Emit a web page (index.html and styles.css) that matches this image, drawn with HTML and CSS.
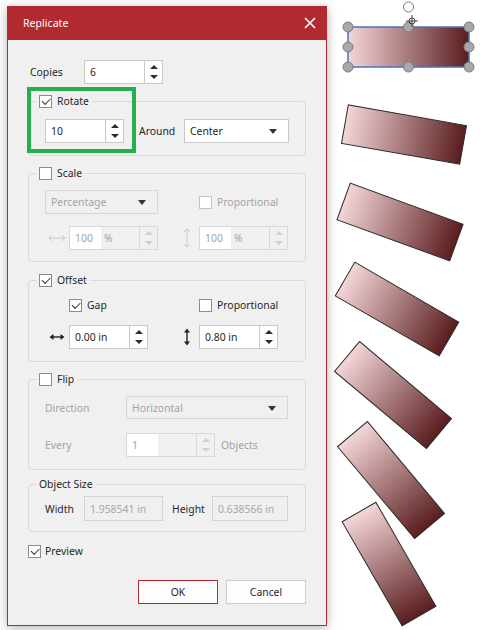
FILE: index.html
```html
<!DOCTYPE html>
<html lang="en">
<head>
    <meta charset="UTF-8">
    <meta name="viewport" content="width=device-width, initial-scale=1.0">
    <title>Replicate</title>
    <link rel="stylesheet" href="styles.css">
</head>
<body>
    <!-- drawing canvas behind the dialog -->
    <svg class="canvas" width="480" height="630" viewBox="0 0 480 630">
        <defs>
            <linearGradient id="shapeFill" x1="0" y1="0" x2="1" y2="0">
                <stop offset="0" stop-color="#f4d6d9"/>
                <stop offset="1" stop-color="#5a1d1e"/>
            </linearGradient>
        </defs>
        <g class="copy">
            <rect x="-60" y="-19.5" width="120" height="39" transform="translate(404 134.5) rotate(10)"/>
            <rect x="-60" y="-19.5" width="120" height="39" transform="translate(400 222) rotate(20)"/>
            <rect x="-60" y="-19.5" width="120" height="39" transform="translate(397 309) rotate(30)"/>
            <rect x="-60" y="-19.5" width="120" height="39" transform="translate(393 395) rotate(40)"/>
            <rect x="-60" y="-19.5" width="120" height="39" transform="translate(391 480) rotate(50)"/>
            <rect x="-60" y="-19.5" width="120" height="39" transform="translate(389 564) rotate(60)"/>
        </g>
        <!-- selected original -->
        <rect class="original" x="348" y="27" width="121" height="40"/>
        <circle class="rotate-grip" cx="408.5" cy="7" r="5"/>
        <g class="grips">
            <circle cx="348" cy="27" r="5"/>
            <circle cx="408.5" cy="27" r="5"/>
            <circle cx="469" cy="27" r="5"/>
            <circle cx="348" cy="47" r="5"/>
            <circle cx="469" cy="47" r="5"/>
            <circle cx="348" cy="67" r="5"/>
            <circle cx="408.5" cy="67" r="5"/>
            <circle cx="469" cy="67" r="5"/>
        </g>
        <g class="move-cursor">
            <circle cx="412" cy="21" r="3"/>
            <line x1="412" y1="15" x2="412" y2="27"/>
            <line x1="406" y1="21" x2="418" y2="21"/>
        </g>
    </svg>

    <div class="dialog">
        <div class="titlebar">
            <span>Replicate</span>
            <svg class="close" width="12" height="12" viewBox="0 0 12 12">
                <path d="M1 1 L11 11 M11 1 L1 11"/>
            </svg>
        </div>

        <div class="dialog-body">
            <div class="copies-row">
                <span class="label copies-label">Copies</span>
                <div class="spin">
                    <span class="spin-text">6</span>
                    <span class="spinner"><i class="up"></i><i class="down"></i></span>
                </div>
            </div>

            <fieldset class="group rotate-group">
                <legend><span class="check on"></span>Rotate</legend>
                <div class="group-body rotate-row">
                    <div class="spin">
                        <span class="spin-text">10</span>
                        <span class="spinner"><i class="up"></i><i class="down"></i></span>
                    </div>
                    <span class="label around-label">Around</span>
                    <div class="combo around-combo">Center<i class="arrow"></i></div>
                </div>
            </fieldset>

            <fieldset class="group scale-group">
                <legend><span class="check"></span>Scale</legend>
                <div class="group-body pair-grid">
                    <div class="combo off scale-combo">Percentage<i class="arrow"></i></div>
                    <label class="option off col-right"><span class="check"></span>Proportional</label>

                    <svg class="icon off" width="18" height="8" viewBox="0 0 18 8"><path d="M1 4 H17 M4 1 L1 4 L4 7 M14 1 L17 4 L14 7"/></svg>
                    <div class="spin off">
                        <span class="spin-text"><b>100</b>%</span>
                        <span class="spinner"><i class="up"></i><i class="down"></i></span>
                    </div>
                    <span></span>
                    <svg class="icon off" width="8" height="20" viewBox="0 0 8 20"><path d="M4 1 V19 M1 4 L4 1 L7 4 M1 16 L4 19 L7 16"/></svg>
                    <div class="spin off">
                        <span class="spin-text"><b>100</b>%</span>
                        <span class="spinner"><i class="up"></i><i class="down"></i></span>
                    </div>
                </div>
            </fieldset>

            <fieldset class="group">
                <legend><span class="check on"></span>Offset</legend>
                <div class="group-body pair-grid offset-grid">
                    <span></span>
                    <label class="option"><span class="check on"></span>Gap</label>
                    <span></span>
                    <span></span>
                    <label class="option"><span class="check"></span>Proportional</label>

                    <svg class="icon" width="16" height="8" viewBox="0 0 16 8"><path d="M3 4 H13"/><path class="head" d="M0.5 4 L4.5 1 V7 Z M15.5 4 L11.5 1 V7 Z"/></svg>
                    <div class="spin">
                        <span class="spin-text">0.00 in</span>
                        <span class="spinner"><i class="up"></i><i class="down"></i></span>
                    </div>
                    <span></span>
                    <svg class="icon" width="8" height="18" viewBox="0 0 8 18"><path d="M4 3 V15"/><path class="head" d="M4 0.5 L1 4.5 H7 Z M4 17.5 L1 13.5 H7 Z"/></svg>
                    <div class="spin">
                        <span class="spin-text">0.80 in</span>
                        <span class="spinner"><i class="up"></i><i class="down"></i></span>
                    </div>
                </div>
            </fieldset>

            <fieldset class="group flip-group">
                <legend><span class="check"></span>Flip</legend>
                <div class="group-body flip-body">
                    <div class="flip-row">
                        <span class="label off flip-label">Direction</span>
                        <div class="combo off direction-combo">Horizontal<i class="arrow"></i></div>
                    </div>
                    <div class="flip-row every-row">
                        <span class="label off flip-label">Every</span>
                        <div class="spin off every-spin">
                            <span class="spin-text"><b>1</b></span>
                            <span class="spinner"><i class="up"></i><i class="down"></i></span>
                        </div>
                        <span class="label off objects-label">Objects</span>
                    </div>
                </div>
            </fieldset>

            <fieldset class="group size-group">
                <legend>Object Size</legend>
                <div class="group-body size-row">
                    <span class="label width-label">Width</span>
                    <span class="readout width-box">1.958541 in</span>
                    <span class="label height-label">Height</span>
                    <span class="readout height-box">0.638566 in</span>
                </div>
            </fieldset>

            <label class="option preview"><span class="check on"></span>Preview</label>

            <div class="buttons">
                <button class="btn primary">OK</button>
                <button class="btn">Cancel</button>
            </div>

            <div class="focus-mark"></div>
        </div>
    </div>
</body>
</html>
```

FILE: styles.css
```css
* {
    box-sizing: border-box;
}
body {
    margin: 0;
    width: 480px;
    height: 630px;
    overflow: hidden;
    position: relative;
    background: #fff;
    font-family: "Noto Sans", "Open Sans", sans-serif;
    font-size: 10.4px;
    color: #262626;
}

/* canvas with the shapes */
.canvas {
    position: absolute;
    left: 0;
    top: 0;
}
.copy rect {
    fill: url(#shapeFill);
    stroke: #2a2a2a;
    stroke-width: 1;
}
.original {
    fill: url(#shapeFill);
    stroke: #4a72c6;
    stroke-width: 1.5;
}
.rotate-grip {
    fill: #fff;
    stroke: #7a7a7a;
}
.grips circle {
    fill: #a8a8a8;
    stroke: #7c7c7c;
}
.move-cursor {
    fill: none;
    stroke: #444;
    stroke-width: 1;
}

/* dialog */
.dialog {
    position: relative;
    margin: 6px 0 0 7px;
    width: 320px;
    height: 620px;
    background: #f0f0f0;
    border: 1px solid #b12a30;
    border-top: none;
    box-shadow: 0 2px 10px rgba(0, 0, 0, 0.3);
}
.titlebar {
    height: 34px;
    background: #b12a30;
    color: #fff;
    font-size: 10.6px;
    display: flex;
    align-items: center;
    justify-content: space-between;
    padding: 0 10px 0 15px;
}
.close {
    fill: none;
    stroke: #fff;
    stroke-width: 1.6;
}
.dialog-body {
    position: relative;
    padding: 20px 20px 0 20px;
}

.label {
    white-space: nowrap;
}
.off {
    color: #a3a3a3;
}

.copies-row {
    display: flex;
    align-items: center;
    height: 24px;
}
.copies-label {
    width: 56px;
    padding-left: 2px;
}

/* spin box */
.spin {
    display: flex;
    width: 79px;
    height: 24px;
    background: #fff;
    border: 1px solid #c9c9c9;
}
.spin-text {
    flex: 1;
    display: flex;
    align-items: center;
    padding-left: 5px;
}
.spinner {
    width: 18px;
    border-left: 1px solid #c9c9c9;
    display: flex;
    flex-direction: column;
    align-items: center;
    justify-content: center;
    gap: 6px;
}
.spinner i {
    display: block;
    width: 0;
    height: 0;
    border-left: 4px solid transparent;
    border-right: 4px solid transparent;
}
.spinner .up {
    border-bottom: 4px solid #2c2c2c;
}
.spinner .down {
    border-top: 4px solid #2c2c2c;
}
.spin.off {
    width: 89px;
    background: #f0f0f0;
    border-color: #d8d8d8;
}
.spin.off .spinner {
    border-color: #d8d8d8;
}
.spin.off .up {
    border-bottom-color: #d0d0d0;
}
.spin.off .down {
    border-top-color: #d0d0d0;
}
.spin.off .spin-text {
    padding-left: 0;
}
.spin.off .spin-text b {
    font-weight: normal;
    background: #fff;
    align-self: stretch;
    display: flex;
    align-items: center;
    width: 31px;
    padding-left: 5px;
    margin-right: 3px;
}

/* drop-down */
.combo {
    position: relative;
    height: 24px;
    background: #fff;
    border: 1px solid #c9c9c9;
    display: flex;
    align-items: center;
    padding-left: 5px;
}
.combo .arrow {
    position: absolute;
    right: 11px;
    top: 9px;
    width: 0;
    height: 0;
    border-left: 4.5px solid transparent;
    border-right: 4.5px solid transparent;
    border-top: 5px solid #333;
}
.combo.off {
    background: #f0f0f0;
    border-color: #d6d6d6;
}

/* checkbox */
.check {
    position: relative;
    display: inline-block;
    width: 13px;
    height: 13px;
    background: #fff;
    border: 1px solid #8c8c8c;
    margin-right: 5px;
    flex: none;
}
.check.on::after {
    content: "";
    position: absolute;
    left: 2px;
    top: 2px;
    width: 7px;
    height: 3.5px;
    border-left: 1px solid #3a3a3a;
    border-bottom: 1px solid #3a3a3a;
    transform: rotate(-45deg);
}
.option.off .check {
    border-color: #c4c4c4;
}
.option {
    display: flex;
    align-items: center;
}

/* group boxes */
.group {
    margin: 10px 0 0 0;
    padding: 0;
    border: 1px solid #d9d9d9;
    border-radius: 4px;
    min-width: 0;
}
.rotate-group,
.scale-group,
.flip-group {
    margin-top: 9px;
}
.group legend {
    margin-left: 7px;
    padding: 0 3px;
    height: 16px;
    display: flex;
    align-items: center;
}
.group-body {
    padding: 10px 16px 12px 16px;
}

.rotate-row {
    display: flex;
    align-items: center;
}
.around-label {
    margin-left: 15px;
    width: 45px;
}
.around-combo {
    width: 105px;
}

.pair-grid {
    display: grid;
    grid-template-columns: 24px 89px 17px 24px 89px;
    grid-auto-rows: 24px;
    row-gap: 12px;
    align-items: center;
    justify-items: start;
    padding-top: 9px;
    padding-bottom: 11px;
}
.pair-grid .icon {
    justify-self: center;
    fill: none;
    stroke: #222;
    stroke-width: 1.4;
}
.pair-grid .icon.off {
    stroke: #c8c8c8;
    stroke-width: 1;
}
.pair-grid .icon .head {
    fill: #222;
    stroke: none;
}
.scale-combo {
    grid-column: 1 / 3;
    width: 113px;
}
.col-right {
    grid-column: 5;
}
.offset-grid {
    grid-template-rows: 18px 24px;
    row-gap: 11px;
    padding-top: 8px;
    padding-bottom: 12px;
}

.flip-body {
    padding-top: 9px;
}
.flip-row {
    display: flex;
    align-items: center;
}
.every-row {
    margin-top: 14px;
}
.flip-label {
    width: 81px;
}
.direction-combo {
    width: 162px;
    height: 23px;
}
.every-spin {
    width: 121px;
}
.every-spin .spin-text b {
    width: 60px;
}
.objects-label {
    margin-left: 6px;
}

.size-group {
    margin-top: 6px;
}
.size-row {
    display: flex;
    align-items: center;
    padding-top: 4px;
    padding-bottom: 10px;
}
.readout {
    height: 25px;
    display: flex;
    align-items: center;
    padding-left: 5px;
    background: #f0f0f0;
    border: 1px solid #d3d3d3;
    color: #a8a8a8;
}
.width-label {
    width: 39px;
}
.width-box {
    width: 79px;
}
.height-label {
    margin-left: 9px;
    width: 40px;
}
.height-box {
    width: 76px;
}

.preview {
    margin-top: 11px;
    height: 16px;
}
.preview .check {
    margin-right: 4px;
}

.buttons {
    margin-top: 21px;
    display: flex;
    justify-content: flex-end;
    gap: 8px;
}
.btn {
    width: 80px;
    height: 24px;
    background: #fdfdfd;
    border: 1px solid #cccccc;
    font-family: inherit;
    font-size: 10.4px;
    color: #262626;
    padding: 0;
}
.btn.primary {
    border-color: #b12a30;
}

/* green highlight drawn over the rotate group */
.focus-mark {
    position: absolute;
    left: 19px;
    top: 47px;
    width: 109px;
    height: 66px;
    border: 4px solid #27ae4f;
}
```
